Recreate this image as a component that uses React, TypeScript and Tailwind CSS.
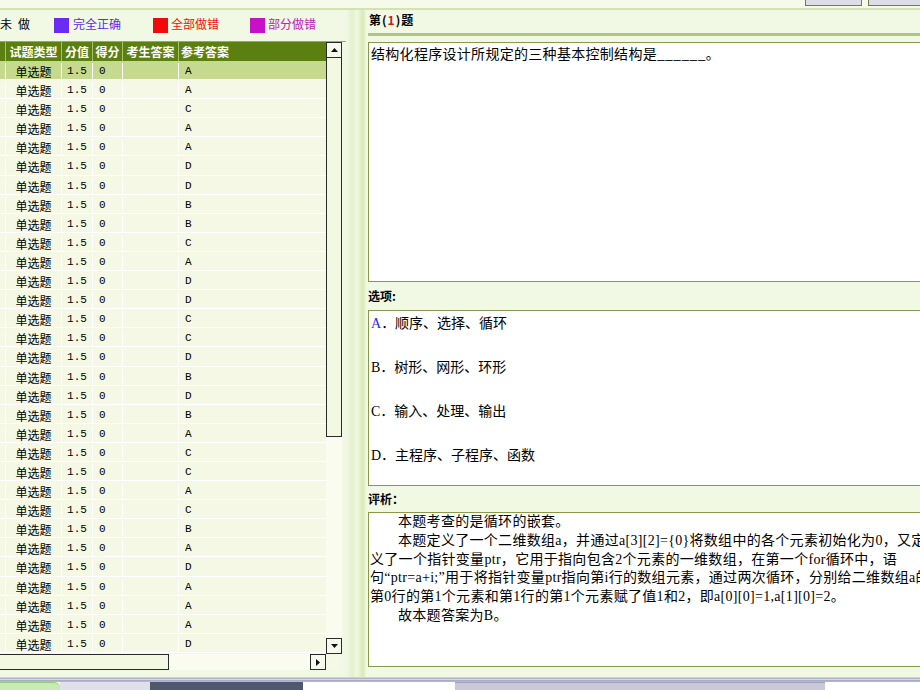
import React from "react";

const answers = ["A", "A", "C", "A", "A", "D", "D", "B", "B", "C", "A", "D", "D", "C", "C", "D", "B", "D", "B", "A", "C", "C", "A", "C", "B", "A", "D", "A", "A", "A", "D"];

const mono = "font-['Liberation_Mono',monospace] text-[11px]";

const ArrowUp = () => (
    <svg width="7" height="4" viewBox="0 0 7 4"><path d="M0 4 L3.5 0 L7 4 Z" fill="#111" /></svg>
);
const ArrowDown = () => (
    <svg width="7" height="4" viewBox="0 0 7 4"><path d="M0 0 L7 0 L3.5 4 Z" fill="#111" /></svg>
);
const ArrowRight = () => (
    <svg width="4" height="7" viewBox="0 0 4 7"><path d="M0 0 L4 3.5 L0 7 Z" fill="#111" /></svg>
);

const LeftPanel = () => {
    return (
        <div className="w-[346px] shrink-0 flex flex-col">
            {/* 图例 */}
            <div className="h-[31px] shrink-0 flex items-center pb-[3px]">
                <span className="ml-0">未</span>
                <span className="ml-[6px]">做</span>
                <span className="ml-[24px] w-[15px] h-[15px] mt-[3px] bg-[#6a2cf2]" />
                <span className="ml-[4px] text-[#5a2ce6]">完全正确</span>
                <span className="ml-[32px] w-[15px] h-[15px] mt-[3px] bg-[#f20a0a]" />
                <span className="ml-[3px] text-[#ee1010]">全部做错</span>
                <span className="ml-[31px] w-[15px] h-[15px] mt-[3px] bg-[#c612c6]" />
                <span className="ml-[3px] text-[#c020c0]">部分做错</span>
            </div>

            {/* 表格 */}
            <div className="flex border-t border-[#9c9c9c]">
                <div className="w-[326px] h-[612px] overflow-hidden">
                    <div className="grid grid-cols-[6px_56px_31px_30px_56px_147px] h-[19px] bg-[#5b7f10] text-white font-bold text-[12px] leading-[19px]">
                        <div className="border-r border-[#a9c070]" />
                        <div className="border-r border-[#a9c070] text-center">试题类型</div>
                        <div className="border-r border-[#a9c070] text-center">分值</div>
                        <div className="border-r border-[#a9c070] text-center">得分</div>
                        <div className="border-r border-[#a9c070] text-center">考生答案</div>
                        <div className="pl-[2px]">参考答案</div>
                    </div>
                    {answers.map((a, i) => (
                        <div
                            key={i}
                            className={
                                "grid grid-cols-[6px_56px_31px_30px_56px_147px] h-[19.1px] pt-[2px] leading-[17px] border-b border-white " +
                                (i === 0 ? "bg-[#c5d98f]" : "bg-[#f4f8e5]")
                            }
                        >
                            <div className="border-r border-white" />
                            <div className="border-r border-white text-center">单选题</div>
                            <div className={"border-r border-white text-center " + mono}>1.5</div>
                            <div className={"border-r border-white pl-[6px] " + mono}>0</div>
                            <div className="border-r border-white" />
                            <div className={"pl-[6px] " + mono}>{a}</div>
                        </div>
                    ))}
                </div>
                {/* 竖滚动条 */}
                <div className="w-[16px] h-[612px] flex flex-col bg-[#f9fcef]">
                    <div className="h-[16px] shrink-0 border border-[#2a2a2a] bg-[#f6f9ee] flex items-center justify-center">
                        <ArrowUp />
                    </div>
                    <div className="h-[379px] shrink-0 border border-t-0 border-[#2a2a2a] bg-[#f3f8e3]" />
                    <div className="flex-1" />
                    <div className="h-[16px] shrink-0 border border-[#2a2a2a] bg-[#f6f9ee] flex items-center justify-center">
                        <ArrowDown />
                    </div>
                </div>
            </div>

            {/* 横滚动条 */}
            <div className="h-[16px] shrink-0 flex">
                <div className="w-[169px] border border-l-0 border-[#2a2a2a] bg-[#f3f8e3]" />
                <div className="w-[141px] bg-[#f9fcef]" />
                <div className="w-[16px] border border-[#2a2a2a] bg-[#f6f9ee] flex items-center justify-center">
                    <ArrowRight />
                </div>
                <div className="w-[16px] bg-[#f4f9e6]" />
            </div>
        </div>
    );
};

const RightPanel = () => {
    return (
        <div className="w-[600px] shrink-0 flex flex-col pl-[2px]">
            <div className="h-[23px] shrink-0 flex items-center pl-[1px] pb-[3px] font-bold text-[12px] tracking-[1px]">
                第(<span className="text-[#d01818]">1</span>)题
            </div>
            <div className="h-[3px] shrink-0 bg-[#b2c57d]" />
            <div className="h-[240px] shrink-0 mt-[6px] bg-white border border-[#86994c] px-[2px] pt-[1px] text-[14px] leading-[19px] tracking-[0.3px]">
                结构化程序设计所规定的三种基本控制结构是______。
            </div>
            <div className="h-[28px] shrink-0 flex items-center font-bold text-[12px]">选项:</div>
            <div className="h-[176px] shrink-0 bg-white border border-[#86994c] px-[2px] pt-[3px] text-[14px] leading-[20px] font-['Liberation_Serif','Noto_Sans_CJK_SC',serif]">
                <div className="h-[44px]"><span className="text-[#2a2ae6]">A</span>．顺序、选择、循环</div>
                <div className="h-[44px]">B．树形、网形、环形</div>
                <div className="h-[44px]">C．输入、处理、输出</div>
                <div className="h-[44px]">D．主程序、子程序、函数</div>
            </div>
            <div className="h-[26px] shrink-0 flex items-center font-bold text-[12px]">评析：</div>
            <div className="h-[155px] shrink-0 bg-white border border-[#86994c] pl-[1px] text-[14px] leading-[18.8px] tracking-[0.3px] whitespace-nowrap font-['Liberation_Serif','Noto_Sans_CJK_SC',serif]">
                <div className="pl-[28px]">本题考查的是循环的嵌套。</div>
                <div className="pl-[28px]">本题定义了一个二维数组a，并通过a[3][2]={"{0}"}将数组中的各个元素初始化为0，又定</div>
                <div>义了一个指针变量ptr，它用于指向包含2个元素的一维数组，在第一个for循环中，语</div>
                <div>句“ptr=a+i;”用于将指针变量ptr指向第i行的数组元素，通过两次循环，分别给二维数组a的</div>
                <div>第0行的第1个元素和第1行的第1个元素赋了值1和2，即a[0][0]=1,a[1][0]=2。</div>
                <div className="pl-[28px]">故本题答案为B。</div>
            </div>
        </div>
    );
};

const TaskBar = () => (
    <div className="h-[13px] shrink-0 flex flex-col">
        <div className="h-[5px] bg-[linear-gradient(to_bottom,#eceef4,#a4a8c0,#d6d8e4,#9ea2ba,#c4c7d6)]" />
        <div className="flex-1 flex">
            <div className="w-[60px] bg-[#c9ebb2] rounded-tr-[6px] border-t border-[#98c880]" />
            <div className="w-[90px] bg-[#dfe0ea]" />
            <div className="w-[153px] bg-[#4f586e]" />
            <div className="w-[152px] bg-white" />
            <div className="w-[370px] bg-[#c7c9d8] border-t border-[#9ea0b8]" />
            <div className="flex-1 bg-white" />
        </div>
    </div>
);

export default function App() {
    return (
        <div className="w-[920px] h-[690px] overflow-hidden flex flex-col bg-[#f1f8e3] text-[12px] text-black font-['Noto_Sans_CJK_SC',sans-serif]">
            <div className="h-[10px] shrink-0 flex justify-end items-start bg-[#f5faeb] border-b-2 border-[#d3e3b0]">
                <div className="w-[57px] h-[6px] bg-[#dcdde6] border border-t-0 border-[#6f7f45] mr-[6px]" />
                <div className="w-[57px] h-[6px] shrink-0 bg-[#dcdde6] border border-t-0 border-[#6f7f45] mr-[-5px]" />
            </div>
            <div className="flex flex-1 min-h-0">
                <LeftPanel />
                <div className="w-[20px] shrink-0 bg-[linear-gradient(to_right,#f3f9e6,#e4f0cc_30%,#f0f7e0_55%,#d9e9b8_85%,#eef6dc)]" />
                <RightPanel />
            </div>
            <TaskBar />
        </div>
    );
}
